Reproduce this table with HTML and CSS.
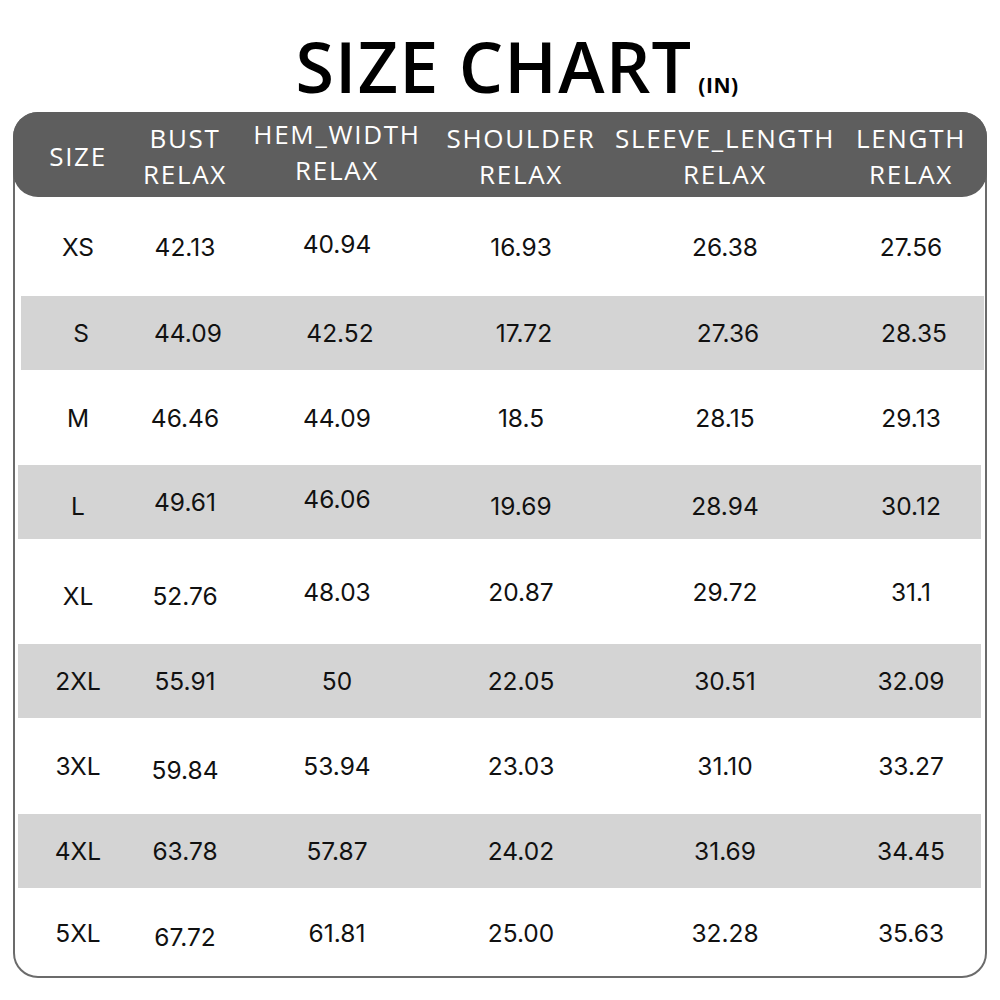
FILE: index.html
```html
<!DOCTYPE html>
<html>
<head>
<meta charset="utf-8">
<link rel="stylesheet" href="styles.css">
</head>
<body>
<h1 class="title">SIZE CHART<span class="unit">(IN)</span></h1>
<div class="chart">
  <div class="head">
    <div class="cell">SIZE</div>
    <div class="cell">BUST<br>RELAX</div>
    <div class="cell hi">HEM_WIDTH<br>RELAX</div>
    <div class="cell">SHOULDER<br>RELAX</div>
    <div class="cell">SLEEVE_LENGTH<br>RELAX</div>
    <div class="cell">LENGTH<br>RELAX</div>
  </div>
  <div class="row r1"><div class="cell">XS</div><div class="cell">42.13</div><div class="cell up">40.94</div><div class="cell">16.93</div><div class="cell">26.38</div><div class="cell">27.56</div></div>
  <div class="row alt a1"><div class="cell">S</div><div class="cell">44.09</div><div class="cell">42.52</div><div class="cell">17.72</div><div class="cell">27.36</div><div class="cell">28.35</div></div>
  <div class="row r2"><div class="cell">M</div><div class="cell">46.46</div><div class="cell">44.09</div><div class="cell">18.5</div><div class="cell">28.15</div><div class="cell">29.13</div></div>
  <div class="row alt a2"><div class="cell dn">L</div><div class="cell">49.61</div><div class="cell up">46.06</div><div class="cell dn">19.69</div><div class="cell dn">28.94</div><div class="cell dn">30.12</div></div>
  <div class="row r3"><div class="cell dn">XL</div><div class="cell dn">52.76</div><div class="cell">48.03</div><div class="cell">20.87</div><div class="cell">29.72</div><div class="cell">31.1</div></div>
  <div class="row alt a3"><div class="cell">2XL</div><div class="cell">55.91</div><div class="cell">50</div><div class="cell">22.05</div><div class="cell">30.51</div><div class="cell">32.09</div></div>
  <div class="row r4"><div class="cell">3XL</div><div class="cell dn">59.84</div><div class="cell">53.94</div><div class="cell">23.03</div><div class="cell">31.10</div><div class="cell">33.27</div></div>
  <div class="row alt a4"><div class="cell">4XL</div><div class="cell">63.78</div><div class="cell">57.87</div><div class="cell">24.02</div><div class="cell">31.69</div><div class="cell">34.45</div></div>
  <div class="row r5"><div class="cell">5XL</div><div class="cell dn">67.72</div><div class="cell">61.81</div><div class="cell">25.00</div><div class="cell">32.28</div><div class="cell">35.63</div></div>
</div>
</body>
</html>
```
FILE: styles.css
```css
html, body {
  margin: 0;
  padding: 0;
  background: #ffffff;
}
body {
  width: 1000px;
  height: 1000px;
  overflow: hidden;
}
.title {
  margin: 0;
  height: 112px;
  box-sizing: border-box;
  padding-top: 28px;
  text-align: center;
  font-family: "Open Sans", sans-serif;
  font-weight: 600;
  font-size: 70px;
  line-height: 76px;
  color: #000;
  letter-spacing: 1.2px;
  padding-left: 34px;
}
.unit {
  font-size: 21px;
  font-weight: 700;
  letter-spacing: 0.5px;
  margin-left: 6px;
}
.chart {
  margin: 0 13px;
  height: 866px;
  box-sizing: border-box;
  border: 2px solid #6b6b6b;
  border-radius: 25px;
  font-family: "Inter", sans-serif;
  color: #111;
}
.head, .row {
  display: grid;
  grid-template-columns: 120px 94px 210px 158px 250px 122px;
  align-items: center;
  padding-left: 3px;
}
.head {
  margin: -2px -2px 0;
  height: 85px;
  background: #5e5e5e;
  border-radius: 25px;
  color: #fff;
  font-family: "Open Sans", sans-serif;
  font-size: 26px;
  letter-spacing: 1.7px;
  line-height: 36px;
  padding-left: 5px;
  padding-top: 3px;
  box-sizing: border-box;
}
.cell {
  text-align: center;
  white-space: nowrap;
}
.head .hi {
  margin-top: -8px;
}
.row {
  font-size: 24.5px;
}
.row .up { margin-top: -6px; }
.row .dn { margin-top: 8px; }
.r1 { height: 99px; }
.r2 { height: 95px; }
.r3 { height: 105px; }
.r4 { height: 96px; }
.r5 { height: 89px; }
.alt {
  height: 74px;
  background: #d4d4d4;
  margin: 0 3px 0 6px;
  padding-left: 0;
}
.a1 { margin: 0 1px 0 6px; }
.a2, .a3, .a4 { margin: 0 4px 0 3px; padding-left: 0; }
```
